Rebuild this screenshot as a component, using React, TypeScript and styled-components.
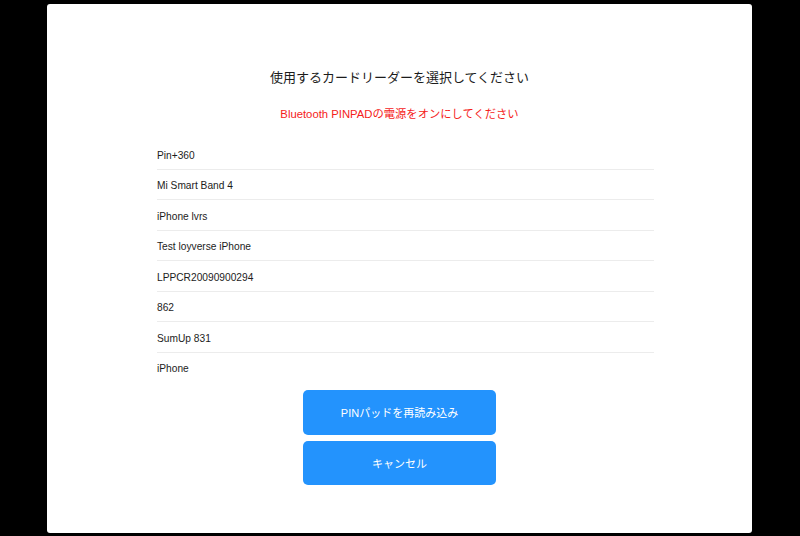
import styled, { createGlobalStyle } from 'styled-components';

const GlobalStyle = createGlobalStyle`
	html, body {
		margin: 0;
		padding: 0;
		background: #000;
	}
	body {
		font-family: 'Liberation Sans', 'Noto Sans CJK JP', sans-serif;
		-webkit-font-smoothing: antialiased;
	}
`;

const Screen = styled.div`
	width: 800px;
	height: 536px;
	background: #000;
	padding: 4px 48px 3px 47px;
	box-sizing: border-box;
	display: flex;
`;

const Card = styled.div`
	flex: 1;
	background: #fff;
	border-radius: 3px;
	display: flex;
	flex-direction: column;
	align-items: center;
	padding-top: 64px;
`;

const Title = styled.h1`
	margin: 0;
	font-size: 13px;
	font-weight: 400;
	line-height: 20px;
	color: #1c1c1c;
`;

const Warning = styled.p`
	margin: 17px 0 0;
	font-size: 11.3px;
	line-height: 18px;
	color: #f5221b;
`;

const DeviceList = styled.ul`
	list-style: none;
	margin: 16px 0 0 110px;
	padding: 0;
	width: 497px;
	align-self: flex-start;
`;

const DeviceRow = styled.li<{ $last?: boolean }>`
	height: 29.5px;
	padding-top: 3px;
	box-sizing: border-box;
	display: flex;
	align-items: center;
	font-size: 10.2px;
	color: #1c1c1c;
	border-bottom: ${(p) => (p.$last ? '1px solid transparent' : '1px solid #ececec')};
	height: 30.5px;
`;

const Actions = styled.div`
	margin-top: 7px;
	display: flex;
	flex-direction: column;
	gap: 6px;
`;

const ActionButton = styled.button`
	width: 193px;
	height: 44.5px;
	border: none;
	border-radius: 5px;
	background: #2393fd;
	color: #fff;
	font-family: inherit;
	font-size: 11px;
	cursor: pointer;
`;

const devices = [
	'Pin+360',
	'Mi Smart Band 4',
	'iPhone lvrs',
	'Test loyverse iPhone',
	'LPPCR20090900294',
	'862',
	'SumUp 831',
	'iPhone',
];

const App = () => {
	return (
		<Screen>
			<GlobalStyle />
			<Card>
				<Title>使用するカードリーダーを選択してください</Title>
				<Warning>Bluetooth PINPADの電源をオンにしてください</Warning>
				<DeviceList>
					{devices.map((name, i) => (
						<DeviceRow key={name} $last={i === devices.length - 1}>
							{name}
						</DeviceRow>
					))}
				</DeviceList>
				<Actions>
					<ActionButton>PINパッドを再読み込み</ActionButton>
					<ActionButton>キャンセル</ActionButton>
				</Actions>
			</Card>
		</Screen>
	);
};

export default App;
